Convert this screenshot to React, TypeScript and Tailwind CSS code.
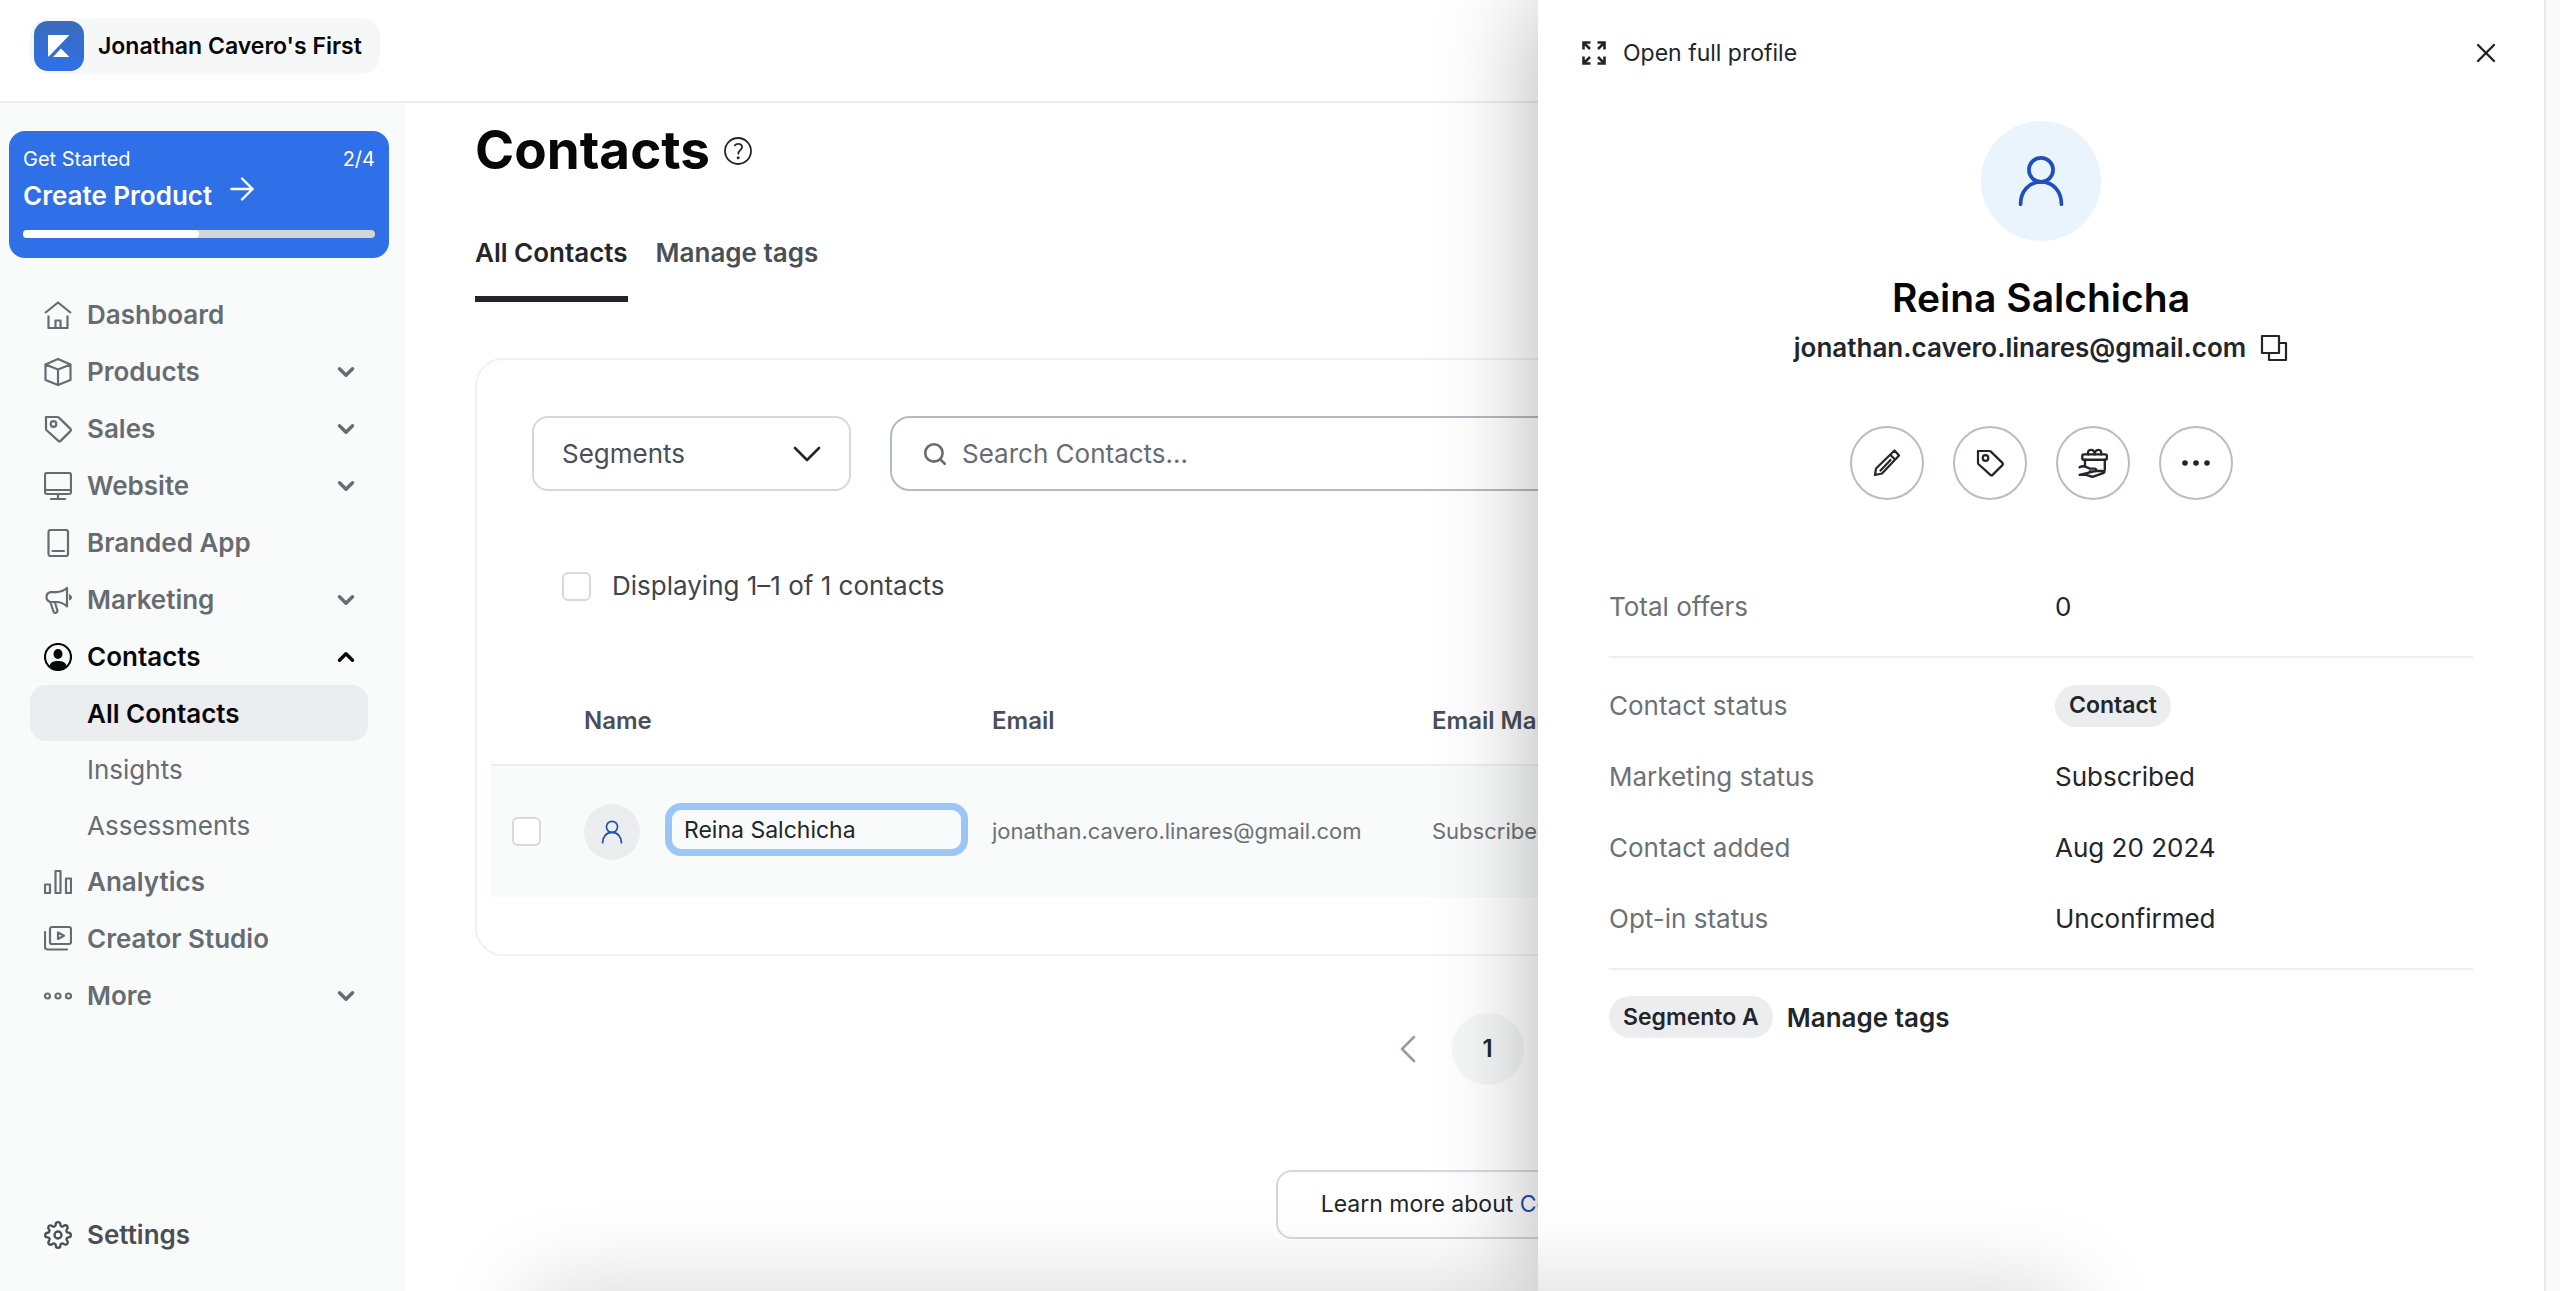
import React, { useState } from "react";
import { ArrowRight, ChevronDown, ChevronLeft, ChevronRight, ChevronUp, Search, X } from "lucide-react";
import { FiSettings } from "react-icons/fi";

const Svg = ({ children, className = "size-7", width = 2.2 }) => (
  <svg
    viewBox="0 0 28 28"
    className={className}
    fill="none"
    stroke="currentColor"
    strokeWidth={width}
    strokeLinecap="round"
    strokeLinejoin="round"
    aria-hidden="true"
  >
    {children}
  </svg>
);

const HomeIcon = () => (
  <Svg>
    <path d="M1 12 14 1.5 27 12M4.5 14.5V27h19V14.5M11.5 27v-7.5h5V27" strokeLinecap="butt" />
  </Svg>
);

const BoxIcon = () => (
  <Svg>
    <path d="M14 1 26.5 6.5V22L14 27 1.5 22V6.500ZM1.5 6.5 14 11.5l12.5-5M14 11.5V27" />
  </Svg>
);

const TagIcon = () => (
  <Svg>
    <path d="M2 2h11.5c.5 0 1 .2 1.4.6l11.5 11.3c.7.7.7 1.5 0 2.2l-9.800 9.800c-.7.7-1.5.7-2.2 0L2.6 15.2c-.4-.4-.6-.9-.6-1.400Z" />
    <circle cx="9.5" cy="9" r="2.8" />
  </Svg>
);

const MonitorIcon = () => (
  <Svg>
    <rect x="1" y="1" width="26" height="21" rx="2" />
    <path d="M1 18h26M14 22v4M7 27h14" />
  </Svg>
);

const TabletIcon = () => (
  <Svg>
    <rect x="4.5" y="1" width="19.5" height="26" rx="2" />
    <path d="M8.5 22H20" />
  </Svg>
);

const MegaphoneIcon = () => (
  <Svg>
    <path d="M23 2v18.500c-3-3-7-4.500-11-4.500H6.500a5 5 0 0 1 0-9.800H12c4-.2 8-1.500 11-4.200Z" />
    <path d="m6.5 16.5 3 9c.4 1.2 1.3 1.7 2.5 1.3s1.7-1.3 1.3-2.500L11 16.500" />
    <path d="M25.5 9v5c1.5-.3 2-1.2 2-2.500s-.5-2.200-2-2.500Z" fill="currentColor" strokeWidth="1" />
  </Svg>
);

const ContactIcon = () => (
  <Svg>
    <circle cx="14" cy="14" r="13" />
    <ellipse cx="14" cy="11" rx="4.5" ry="5" fill="currentColor" stroke="none" />
    <path
      d="M5.5 22.5c1-3.2 4-4.5 8.5-4.5s7.5 1.3 8.5 4.500c-2.3 2.7-5.3 4.5-8.5 4.500s-6.2-1.8-8.5-4.500Z"
      fill="currentColor"
      stroke="none"
    />
  </Svg>
);

const BarsIcon = () => (
  <Svg>
    <path d="M1 16.5h5V25H1ZM11.5 3h5v22h-5ZM22 10.5h5V25h-5Z" />
  </Svg>
);

const StudioIcon = () => (
  <Svg>
    <rect x="6" y="2" width="21" height="17" rx="2" />
    <path d="M1 7v15a2.5 2.5 0 0 0 2.5 2.500H23M14 7.500v6.500l6-3.300Z" />
  </Svg>
);

const MoreIcon = () => (
  <Svg>
    <circle cx="3.5" cy="14" r="2.500" />
    <circle cx="14" cy="14" r="2.500" />
    <circle cx="24.5" cy="14" r="2.500" />
  </Svg>
);

const PersonIcon = ({ className, width }) => (
  <Svg className={className} width={width}>
    <circle cx="14" cy="8" r="6.5" />
    <path d="M3 26.5c0-7 4.5-12 11-12s11 5 11 12" />
  </Svg>
);

const HelpIcon = () => (
  <Svg width={1.8}>
    <circle cx="14" cy="14" r="13" />
    <path d="M10.8 8.300c1-1.100 2.200-1.600 3.600-1.500 2.300.1 3.700 1.400 3.700 3.300 0 2.900-3.700 3.300-3.800 6.500" />
    <circle cx="14.2" cy="20.8" r=".6" fill="currentColor" />
  </Svg>
);

const ExpandIcon = () => (
  <Svg width={2.6}>
    <path
      d="M3.5 10.5v-7h7M4 4l6 6M17.5 3.5h7v7M24 4l-6 6M3.5 17.5v7h7M4 24l6-6M24.5 17.5v7h-7M24 24l-6-6"
      strokeLinecap="butt"
      strokeLinejoin="miter"
    />
  </Svg>
);

const CopyIcon = () => (
  <Svg>
    <path d="M2 2h17v17H2ZM19 9h7v17H9v-7" />
  </Svg>
);

const PencilIcon = () => (
  <Svg>
    <path d="M21.5 1.5 26 6.5 9 24.5 2 26l1-6.500ZM17.5 6l4.500 4.500M17.5 11 7.500 21.500" />
  </Svg>
);

const GiftHandIcon = () => (
  <Svg className="size-[30px]">
    <rect x="4" y="6" width="23" height="5" rx="1.5" />
    <path d="M6.5 11v5M25 11v9.500" />
    <path d="M9.5 6c-.8-2.200.2-4.300 2.500-4.300s3.500 2 3.500 4.300c0-2.300 1.200-4.300 3.500-4.300s3.300 2.100 2.500 4.300" />
    <path d="M1.5 18c2.500-1.600 4.500-1.200 6.500-.2l3 1.400h4.500c2 0 2 2.600 0 2.600H11M16 21.500h7c2 0 2.300 1.300.5 2L13.500 27l-6-2h-6Z" />
  </Svg>
);

const menu = [
  { label: "Dashboard", icon: <HomeIcon /> },
  { label: "Products", icon: <BoxIcon />, more: true },
  { label: "Sales", icon: <TagIcon />, more: true },
  { label: "Website", icon: <MonitorIcon />, more: true },
  { label: "Branded App", icon: <TabletIcon /> },
  { label: "Marketing", icon: <MegaphoneIcon />, more: true },
  { label: "Contacts", icon: <ContactIcon />, more: true, children: ["All Contacts", "Insights", "Assessments"] },
  { label: "Analytics", icon: <BarsIcon /> },
  { label: "Creator Studio", icon: <StudioIcon /> },
  { label: "More", icon: <MoreIcon />, more: true },
];

const details = [
  { label: "Contact status", value: <Pill>Contact</Pill> },
  { label: "Marketing status", value: "Subscribed" },
  { label: "Contact added", value: "Aug 20 2024" },
  { label: "Opt-in status", value: "Unconfirmed" },
];

function Pill({ children }) {
  return (
    <span className="inline-flex h-[42px] items-center rounded-full bg-[#ecedef] px-3.5 text-[23px] font-semibold text-[#22262a]">
      {children}
    </span>
  );
}

function Detail({ label, children }) {
  return (
    <div className="flex h-[71px] items-center">
      <dt className="w-[446px] text-[#6c7177]">{label}</dt>
      <dd className="text-[#22262a]">{children}</dd>
    </div>
  );
}

function Sidebar() {
  return (
    <aside className="flex w-[405px] shrink-0 flex-col bg-[#f9fbfa]">
      <a href="#" className="mx-[9px] mt-7 block h-[127px] w-[380px] rounded-2xl bg-[#2f70e8] px-3.5 pt-4 text-white">
        <span className="flex justify-between text-xl leading-6">
          <span>Get Started</span>
          <span>2/4</span>
        </span>
        <span className="flex h-12 items-center gap-3 text-[26px] font-semibold">
          Create Product
          <ArrowRight className="mb-3 size-9" strokeWidth={1.6} />
        </span>
        <span className="mt-[11px] block h-2 overflow-hidden rounded-full bg-[#d4d5d7]">
          <span className="block h-full w-1/2 rounded-r-full bg-white" />
        </span>
      </a>

      <nav className="px-[30px] pt-7 text-[26px] font-semibold text-[#676c72]">
        <ul>
          {menu.map((item) => (
            <li key={item.label}>
              <a
                href="#"
                className={`flex h-[57px] items-center gap-[15px] pl-3.5 pr-4 ${item.children ? "text-[#07090b]" : ""}`}
              >
                {item.icon}
                <span className="flex-1">{item.label}</span>
                {item.children ? (
                  <ChevronUp className="size-[26px]" strokeWidth={3.2} />
                ) : (
                  item.more && <ChevronDown className="size-[26px]" strokeWidth={3.2} />
                )}
              </a>
              {item.children && (
                <ul>
                  {item.children.map((child, i) => (
                    <li key={child}>
                      <a
                        href="#"
                        className={`flex h-14 w-[338px] items-center rounded-2xl pl-[57px] ${
                          i === 0 ? "bg-[#ecedef] text-[#07090b]" : "font-normal"
                        }`}
                      >
                        {child}
                      </a>
                    </li>
                  ))}
                </ul>
              )}
            </li>
          ))}
        </ul>
      </nav>

      <a
        href="#"
        className="mx-[30px] mb-7 mt-auto flex h-[57px] items-center gap-[15px] pl-3.5 text-[26px] font-semibold text-[#4a4e57]"
      >
        <FiSettings className="size-7" />
        Settings
      </a>
    </aside>
  );
}

function ContactsPage() {
  const [name, setName] = useState("Reina Salchicha");

  return (
    <main className="min-w-0 flex-1 pl-[70px] pr-[60px]">
      <div className="flex h-24 items-center gap-3.5">
        <h1 className="text-[53px] font-bold text-[#050708]">Contacts</h1>
        <button aria-label="Help" className="text-[#22262a]">
          <HelpIcon />
        </button>
      </div>

      <div className="flex gap-7 pt-7 text-[26px] font-semibold">
        <button className="h-[75px] border-b-6 border-[#22262a] pb-[18px] text-[#22262a]">All Contacts</button>
        <button className="h-[75px] pb-6 text-[#4a4e57]">Manage tags</button>
      </div>

      <section className="mt-14 rounded-[28px] border-2 border-[#f0f1f1] px-3.5 pb-[57px] pt-14">
        <div className="flex gap-[39px] px-[41px]">
          <div className="relative w-[319px] shrink-0">
            <select
              aria-label="Segments"
              className="h-[75px] w-full appearance-none rounded-2xl border-2 border-[#d7d8dd] bg-white pl-7 text-[26px] text-[#4a4e57]"
            >
              <option>Segments</option>
            </select>
            <ChevronDown className="pointer-events-none absolute right-5 top-3.5 size-12 text-[#22262a]" strokeWidth={1.3} />
          </div>
          <label className="flex h-[75px] flex-1 items-center gap-3.5 rounded-[20px] border-2 border-[#b5bac0] pl-[30px]">
            <Search className="size-[26px] text-[#676c72]" strokeWidth={2.4} />
            <input
              type="search"
              aria-label="Search Contacts"
              placeholder="Search Contacts…"
              className="flex-1 text-[26px] outline-none placeholder:text-[#676c72]"
            />
          </label>
        </div>

        <label className="flex items-center gap-[21px] pl-[71px] pt-[75px] text-[26px] leading-10 text-[#3f444b]">
          <input type="checkbox" className="size-[29px] appearance-none rounded-md border-2 border-[#d7d9dd] bg-white" />
          Displaying 1–1 of 1 contacts
        </label>

        <table className="mt-[71px] w-full table-fixed text-left text-[22px]">
          <thead>
            <tr className="h-[88px] border-b-2 border-[#eeefef] text-2xl text-[#4a4e57]">
              <th className="w-[93px]" />
              <th className="w-[408px] font-semibold">Name</th>
              <th className="w-[440px] font-semibold">Email</th>
              <th className="font-semibold">Email Marketing</th>
            </tr>
          </thead>
          <tbody>
            <tr className="h-[132px] bg-[#f9fbfa] text-[#6c7177]">
              <td className="pl-[21px]">
                <input
                  type="checkbox"
                  aria-label="Select Reina Salchicha"
                  className="block size-[29px] appearance-none rounded-md border-2 border-[#d7d9dd] bg-white"
                />
              </td>
              <td>
                <div className="flex items-center gap-[25px]">
                  <span className="flex size-14 shrink-0 items-center justify-center rounded-full bg-[#ecedef] text-[#1f4fb8]">
                    <PersonIcon className="size-6" width={2} />
                  </span>
                  <input
                    aria-label="Name"
                    value={name}
                    onChange={(e) => setName(e.target.value)}
                    className="mb-1 h-[53px] w-[303px] rounded-2xl border-[7px] border-[#9bc6f8] bg-[#f9fbfa] pl-3 text-[23px] text-[#22262a] outline-none"
                  />
                </div>
              </td>
              <td>jonathan.cavero.linares@gmail.com</td>
              <td>Subscribed</td>
            </tr>
          </tbody>
        </table>
      </section>

      <div className="mt-[57px] flex items-center justify-center gap-5">
        <button aria-label="Previous page" className="text-[#9b9c9e]">
          <ChevronLeft className="size-12" strokeWidth={1.3} />
        </button>
        <button className="size-[72px] rounded-full bg-[#f4f7f6] text-2xl font-semibold text-[#22262a]">1</button>
        <button aria-label="Next page" className="text-[#9b9c9e]">
          <ChevronRight className="size-12" strokeWidth={1.3} />
        </button>
      </div>

      <p className="mx-auto mt-[85px] flex h-[69px] w-fit items-center rounded-2xl border-2 border-[#d7d8dd] px-[43px] text-[23px] text-[#22262a]">
        Learn more about&nbsp;
        <a href="#" className="text-[#1f4fb8]">
          Contact lists
        </a>
      </p>
    </main>
  );
}

function ContactDrawer() {
  const round = "flex size-[74px] items-center justify-center rounded-full border-2 border-[#b9bdc2]";

  return (
    <aside className="absolute inset-y-0 right-4 w-[1006px] bg-white px-[42px] text-[#22262a] shadow-[0_0_95px_rgba(0,0,0,0.3)]">
      <div className="flex items-center justify-between pt-[33px]">
        <a href="#" className="flex items-center gap-[15px] text-[23px] leading-10">
          <ExpandIcon />
          Open full profile
        </a>
        <button aria-label="Close">
          <X className="size-8" strokeWidth={1.8} />
        </button>
      </div>

      <div className="flex flex-col items-center pt-12">
        <span className="flex size-[120px] items-center justify-center rounded-full bg-[#e9f4fd] text-[#1f4fb8]">
          <PersonIcon className="size-[52px]" width={2} />
        </span>
        <h2 className="mt-8 text-[39px] font-semibold leading-[50px] text-[#050708]">Reina Salchicha</h2>
        <div className="mt-[5px] flex items-center gap-3.5 text-[26px] font-semibold leading-10">
          jonathan.cavero.linares@gmail.com
          <button aria-label="Copy email">
            <CopyIcon />
          </button>
        </div>
        <div className="mt-[58px] flex gap-[29px]">
          <button aria-label="Edit" className={round}>
            <PencilIcon />
          </button>
          <button aria-label="Tag" className={round}>
            <TagIcon />
          </button>
          <button aria-label="Grant offer" className={round}>
            <GiftHandIcon />
          </button>
          <button aria-label="More actions" className={round}>
            <svg viewBox="0 0 28 6" className="w-7" fill="currentColor">
              <circle cx="3" cy="3" r="2.8" />
              <circle cx="14" cy="3" r="2.8" />
              <circle cx="25" cy="3" r="2.8" />
            </svg>
          </button>
        </div>
      </div>

      <div className="mx-[29px] pt-[71px] text-[26px]">
        <dl className="border-b-2 border-[#eeefef] pb-3.5">
          <Detail label="Total offers">0</Detail>
        </dl>
        <dl className="border-b-2 border-[#eeefef] pb-3.5 pt-3">
          {details.map((row) => (
            <Detail key={row.label} label={row.label}>
              {row.value}
            </Detail>
          ))}
        </dl>
        <div className="flex items-center gap-3.5 pt-[26px]">
          <Pill>Segmento A</Pill>
          <button className="font-semibold">Manage tags</button>
        </div>
      </div>
    </aside>
  );
}

const App = () => {
  return (
    <div className="relative flex h-screen flex-col overflow-hidden bg-white font-['Inter','Liberation_Sans',sans-serif]">
      <header className="flex h-[103px] shrink-0 items-start border-b-2 border-[#ecedee] px-[30px] pt-[18px]">
        <button className="flex h-14 items-center gap-3.5 rounded-[18px] bg-[#f6f8f7] pl-1 pr-[18px] text-[23px] font-semibold text-[#050708]">
          <svg viewBox="0 0 50 50" className="size-[50px]" aria-hidden="true">
            <defs>
              <linearGradient id="brand" x1="0" y1="0" x2="0" y2="1">
                <stop offset="0" stopColor="#3a6cbb" />
                <stop offset="1" stopColor="#2f70e8" />
              </linearGradient>
            </defs>
            <rect width="50" height="50" rx="14" fill="url(#brand)" />
            <path d="M14 14h21.5L14.8 35.500H14ZM27 27.500l8.500 8.500H19Z" fill="#fff" />
          </svg>
          Jonathan Cavero's First
        </button>
      </header>

      <div className="flex min-h-0 flex-1">
        <Sidebar />
        <ContactsPage />
      </div>

      <ContactDrawer />
      <div className="absolute inset-y-0 right-0 w-4 border-l-2 border-[#ebebeb] bg-[#fafafa]" />
      <div className="pointer-events-none absolute left-[530px] right-[490px] top-full h-20 shadow-[0_0_90px_rgba(0,0,0,0.18)]" />
    </div>
  );
};

export default App;
